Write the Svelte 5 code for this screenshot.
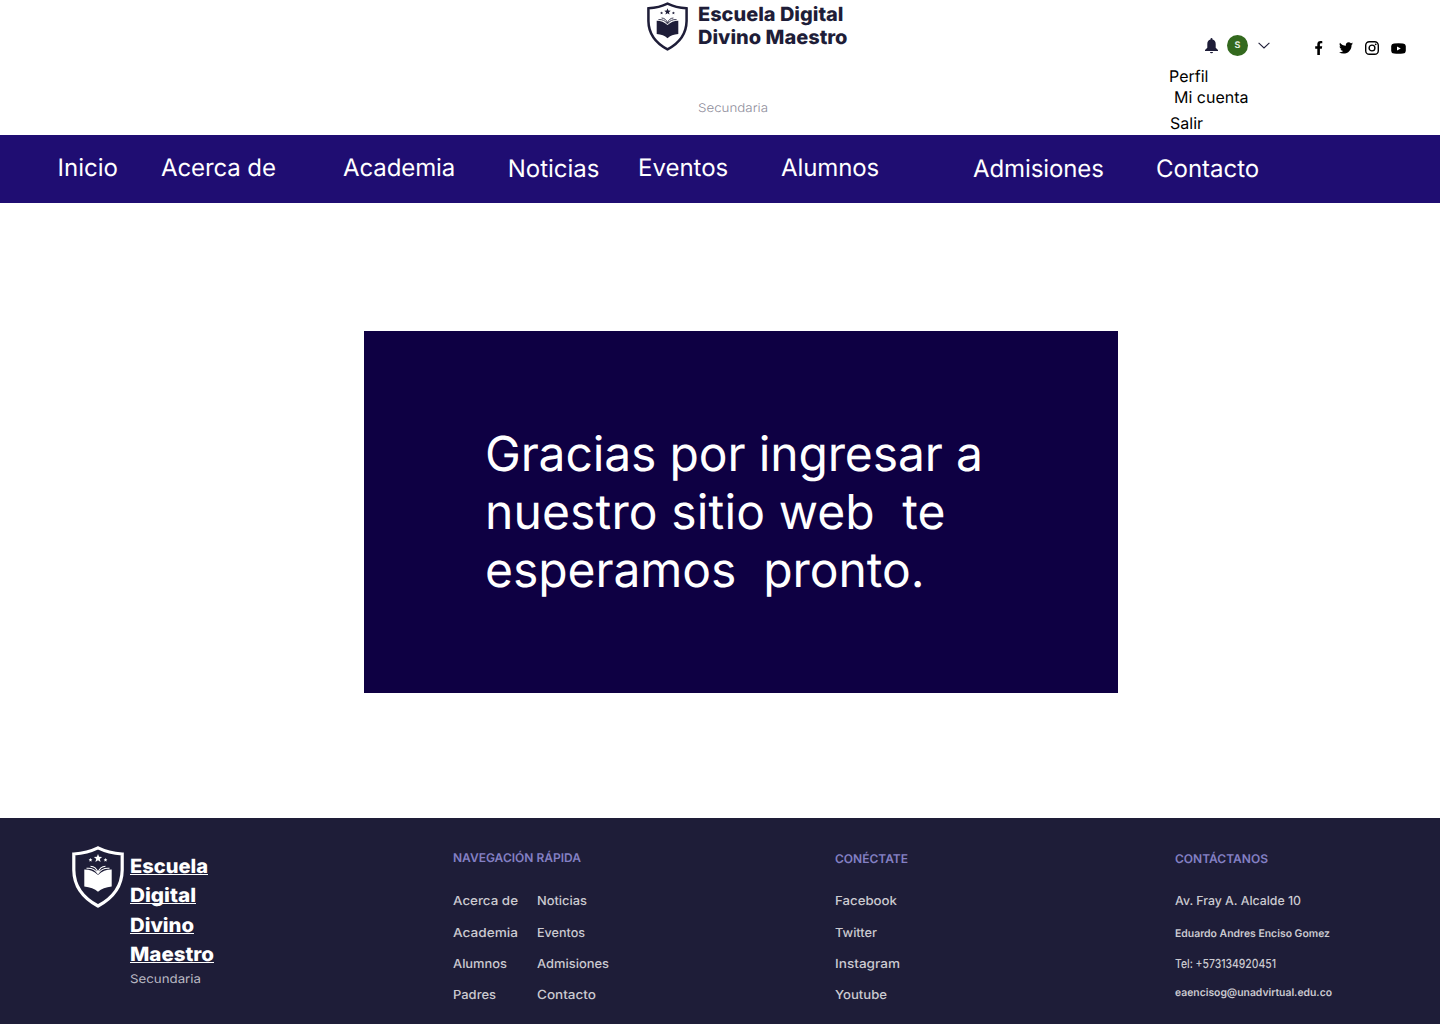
<script>
  const menu = [
    { text: 'Inicio' },
    { text: 'Acerca de', tight: true },
    { text: 'Academia', tight: true },
    { text: 'Noticias', low: true },
    { text: 'Eventos' },
    { text: 'Alumnos', tight: true },
    { text: 'Admisiones', low: true, tight: true },
    { text: 'Contacto', low: true }
  ];

  // Every footer entry is [label, drawn width]
  const quickA = [['Acerca de', 65], ['Academia', 65], ['Alumnos', 54], ['Padres', 43]];
  const quickB = [['Noticias', 50], ['Eventos', 48], ['Admisiones', 72], ['Contacto', 59]];
  const social = [['Facebook', 62], ['Twitter', 42], ['Instagram', 65], ['Youtube', 52]];
  const contact = [
    ['Av. Fray A. Alcalde 10', 126],
    ['Eduardo Andres Enciso Gomez', 155, 'small'],
    ['Tel: +573134920451', 101],
    ['eaencisog@unadvirtual.edu.co', 157, 'small mail']
  ];
  const footBrand = [['Escuela', 78], ['Digital', 66], ['Divino', 64], ['Maestro', 84]];
</script>

{#snippet line(text, width, kind)}
  <svg class="line {kind}" {width} height="20"><text x="0" y="15" textLength={width} lengthAdjust="spacingAndGlyphs">{text}</text></svg>
{/snippet}

{#snippet shield(kind)}
  <svg class="shield {kind}" viewBox="0 0 52 62">
    <path class="rim" d="M26 1.900 Q15.500 7 1.800 8 V24 C2 40 11 52 26 60 C41 52 50 40 50.200 24 V8 Q36.500 7 26 1.900Z" />
    <path class="ink" d="M26 8 l1.100 2.800 3 .2-2.300 1.900.8 3L26 14.300l-2.600 1.600.8-3-2.300-1.900 3-.2z" />
    <path class="ink" d="M18.500 12 l.6 1.200 1.300.1-1 .9.3 1.400-1.200-.7-1.200.7.3-1.400-1-.9 1.300-.1zM33.500 12l.6 1.200 1.300.1-1 .9.3 1.400-1.200-.7-1.200.7.3-1.400-1-.9 1.300-.1z" />
    <path class="ink" d="M12.300 23.600 Q20 23.500 26 29 Q32 23.500 39.700 23.600 V40.500 Q31 41.300 26 45.800 Q21 41.300 12.300 40.500Z" />
    <path class="page" d="M14.500 22.300 Q22 21.500 26 27.800 Q30 21.500 37.500 22.300M18.500 20.200 Q24 20.500 26 26.500 Q28 20.500 33.500 20.200" />
  </svg>
{/snippet}

<div class="page-root">
  <header>
    <div class="brand">
      {@render shield('dark')}
      <div class="brand-text">
        {@render line('Escuela Digital', 145.5, 'title')}
        {@render line('Divino Maestro', 149.5, 'title')}
        {@render line('Secundaria', 70, 'level')}
      </div>
    </div>
    <div class="account">
      <div class="tools">
        <svg class="bell" viewBox="0 0 13 16"><path d="M6.500 0a1 1 0 0 1 1 1v.6c2 .5 3.200 2.200 3.200 4.400v3.800L13 12v1H0v-1l2.300-2.200V6c0-2.200 1.200-3.900 3.200-4.400V1a1 1 0 0 1 1-1zM5 14h3a1.500 1.300 0 0 1-3 0z" /></svg>
        <span class="avatar">S</span>
        <svg class="chevron" viewBox="0 0 12 7"><path d="M.6 .8 6 6 11.400 .8" /></svg>
      </div>
      <ul>
        <li>Perfil</li>
        <li class="mine">Mi cuenta</li>
        <li class="exit">Salir</li>
      </ul>
    </div>
    <div class="networks">
      <svg width="8" height="14" viewBox="0 0 8 14"><path d="M2.300 14V7.700H.2V5.200h2.100V3.400C2.300 1.200 3.500 0 5.500 0c.9 0 1.800.2 1.800.2v2.100H6.200c-1 0-1.300.6-1.300 1.300v1.600h2.300l-.4 2.500H4.900V14z" /></svg>
      <svg width="14" height="12" viewBox="0 0 24 20"><path d="M24 2.400c-.9.400-1.800.7-2.800.8 1-.6 1.800-1.600 2.200-2.700-1 .6-2 1-3.100 1.200A4.900 4.900 0 0 0 11.900 6.200C7.700 6 4.100 4 1.700.9.400 3.100 1 6 3.200 7.500c-.8 0-1.600-.2-2.200-.6 0 2.300 1.600 4.400 3.900 4.900-.7.200-1.500.2-2.200.1.600 2 2.400 3.400 4.600 3.400A9.900 9.900 0 0 1 0 17.400 14 14 0 0 0 7.500 19.600c9.100 0 14.300-7.700 14-14.600 1-.7 1.800-1.600 2.500-2.600z" /></svg>
      <svg width="14" height="14" viewBox="0 0 14 14"><rect class="ring" x=".7" y=".7" width="12.600" height="12.600" rx="3.600" /><circle class="ring" cx="7" cy="7" r="2.900" /><circle cx="10.700" cy="3.300" r=".9" /></svg>
      <svg width="15" height="11" viewBox="0 0 15 11"><path fill-rule="evenodd" d="M3 .4Q7.500-.1 12 .4 14.600.5 14.800 3V8Q14.600 10.500 12 10.600 7.500 11.100 3 10.600.4 10.500.2 8V3Q.4.500 3 .4zM6 3.400v4.200l3.800-2.100z" /></svg>
    </div>
  </header>

  <nav>
    {#each menu as item}
      <span class:low={item.low} class:tight={item.tight}>{item.text}</span>
    {/each}
  </nav>

  <main>
    <section>
      <p>Gracias por ingresar a</p>
      <p class="middle">{'nuestro sitio web  te'}</p>
      <p class="last">{'esperamos  pronto.'}</p>
    </section>
  </main>

  <footer>
    <div class="foot-brand">
      {@render shield('light')}
      <div class="foot-name">
        {#each footBrand as [text, width]}
          <span class="word">{@render line(text, width, 'bold')}</span>
        {/each}
        {@render line('Secundaria', 71, 'foot-level')}
      </div>
    </div>
    <div class="column first">
      {@render line('NAVEGACIÓN RÁPIDA', 128, 'head')}
      <div class="lists">
        <div class="list">
          {#each quickA as [text, width]}{@render line(text, width, 'item')}{/each}
        </div>
        <div class="list">
          {#each quickB as [text, width]}{@render line(text, width, 'item')}{/each}
        </div>
      </div>
    </div>
    <div class="column">
      {@render line('CONÉCTATE', 73, 'head')}
      <div class="list">
        {#each social as [text, width]}{@render line(text, width, 'item')}{/each}
      </div>
    </div>
    <div class="column">
      {@render line('CONTÁCTANOS', 93, 'head')}
      <div class="list">
        {#each contact as [text, width, kind]}{@render line(text, width, 'item ' + (kind ?? ''))}{/each}
      </div>
    </div>
  </footer>
</div>

<style>
  :global(body) { background: #fff; }
  .page-root {
    width: 1440px;
    height: 1024px;
    overflow: hidden;
    display: flex;
    flex-direction: column;
    font-family: Inter, sans-serif;
    text-rendering: geometricPrecision;
    color: #000;
  }
  svg { display: block; flex: none; }
  .line { overflow: visible; font-size: 12.5px; }

  header {
    height: 135px;
    flex: none;
    display: grid;
    grid-template-columns: 522px 146px 1fr;
    padding-left: 647px;
    box-sizing: border-box;
  }
  .brand { display: flex; gap: 10px; padding-top: 2px; }
  .shield .rim { fill: none; stroke-width: 3.200; }
  .shield .page { fill: none; stroke-width: 1.100; }
  .dark { width: 41px; height: 49px; }
  .dark .rim, .dark .page { stroke: #1e1d38; }
  .dark .ink { fill: #1e1d38; }
  .light { width: 52px; height: 62px; }
  .light .rim, .light .page { stroke: #fff; }
  .light .ink { fill: #fff; }
  .brand-text { display: flex; flex-direction: column; gap: 3.500px; padding-top: 3.500px; }
  .title { font-size: 19.500px; font-weight: 800; fill: #1e1d38; }
  .level { font-size: 12px; font-weight: 300; fill: #8e8d9b; margin-top: 44px; }

  .account { padding-top: 35px; }
  .tools { display: flex; align-items: center; height: 21px; padding-left: 36px; }
  .bell { width: 13px; height: 16px; fill: #1e1d38; margin-right: 9px; }
  .avatar {
    width: 21px;
    height: 21px;
    border-radius: 50%;
    background: #33691e;
    color: #e3ecdf;
    font-size: 9px;
    font-weight: 700;
    line-height: 21px;
    text-align: center;
    margin-right: 10px;
  }
  .chevron { width: 12px; height: 7px; fill: none; stroke: #1e1d38; stroke-width: 1.100; }
  ul { list-style: none; margin: 11px 0 0; padding: 0; font-size: 16px; line-height: 19px; }
  .mine { margin: 2px 0 7px 5px; }
  .exit { margin-left: 1px; }
  .networks { display: flex; align-items: center; height: 14px; margin-top: 41px; gap: 12.500px; }
  .networks svg:first-child { margin-right: 3px; }
  .networks svg:last-child { margin-left: -.5px; }
  .ring { fill: none; stroke: #000; stroke-width: 1.400; }

  nav {
    height: 68px;
    flex: none;
    box-sizing: border-box;
    background: #1f0d72;
    color: #fff;
    font-size: 24px;
    line-height: 29px;
    padding: 18px 0 0 57.500px;
    display: grid;
    grid-template-columns: 103.500px 182px 164.700px 130.300px 143px 192px 183px 1fr;
    white-space: nowrap;
  }
  .low { padding-top: 1px; }
  .tight { letter-spacing: -.1px; }

  main { height: 615px; flex: none; padding: 128px 0 0 364px; box-sizing: border-box; }
  section {
    width: 754px;
    height: 362px;
    box-sizing: border-box;
    padding: 94px 0 0 121px;
    background: #0e0043;
    color: #fff;
  }
  p { margin: 0; font-size: 48px; line-height: 58px; white-space: pre; letter-spacing: -.14px; }
  .middle { letter-spacing: .13px; }
  .last { letter-spacing: -.06px; }

  footer {
    flex: 1;
    background: #1e1d38;
    display: grid;
    grid-template-columns: 381px 382px 340px 1fr;
    padding-left: 72px;
  }
  .foot-brand { display: flex; gap: 6px; padding-top: 28px; }
  .foot-name { padding-top: 12px; }
  .word { display: block; width: fit-content; height: 29.400px; }
  .bold { font-size: 19.500px; font-weight: 800; fill: #fff; height: 16px; border-bottom: 1.500px solid #fff; }
  .foot-level { font-size: 12px; fill: #b9b8c2; margin-top: -8px; }
  .column { padding-top: 30px; }
  .first { padding-top: 29px; }
  .head { font-size: 12px; font-weight: 600; fill: #8480c4; }
  .lists { display: grid; grid-template-columns: 84px 1fr; }
  .list { display: flex; flex-direction: column; gap: 11.300px; padding-top: 22.300px; }
  .first .list { padding-top: 23.300px; }
  .item { fill: #cbcad0; font-weight: 500; }
  .small { font-size: 10.500px; font-weight: 600; }
  .mail { margin-top: -3px; }
</style>
